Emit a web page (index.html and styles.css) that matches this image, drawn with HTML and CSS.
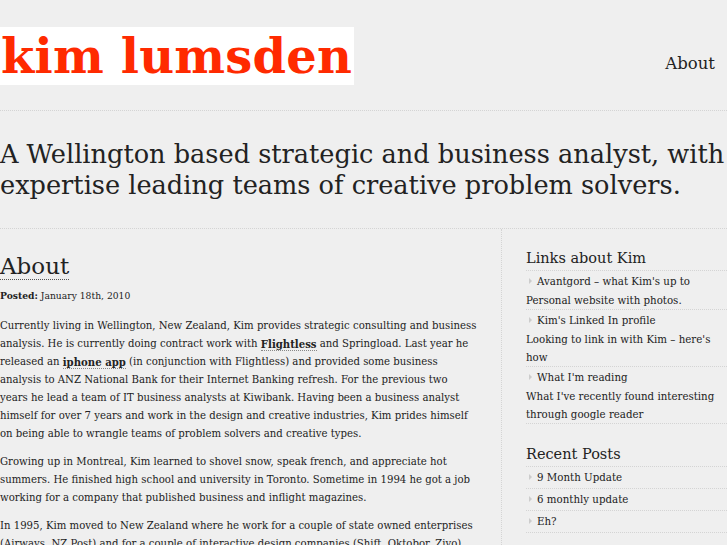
FILE: index.html
```html
<!DOCTYPE html>
<html>
<head>
<meta charset="utf-8">
<link rel="stylesheet" href="styles.css">
</head>
<body>
<div class="page">
  <header class="header">
    <div class="logo">kim lumsden</div>
    <nav class="nav"><a href="#">About</a></nav>
  </header>
  <div class="tagline">A Wellington based strategic and business analyst, with<br>expertise leading teams of creative problem solvers.</div>
  <div class="columns">
    <main class="main">
      <h2 class="post-title">About</h2>
      <div class="meta"><b>Posted:</b> January 18th, 2010</div>
      <p>Currently living in Wellington, New Zealand, Kim provides strategic consulting and business analysis. He is currently doing contract work with <a href="#">Flightless</a> and Springload. Last year he released an <a href="#">iphone app</a> (in conjunction with Flightless) and provided some business analysis to ANZ National Bank for their Internet Banking refresh. For the previous two years he lead a team of IT business analysts at Kiwibank. Having been a business analyst himself for over 7 years and work in the design and creative industries, Kim prides himself on being able to wrangle teams of problem solvers and creative types.</p>
      <p>Growing up in Montreal, Kim learned to shovel snow, speak french, and appreciate hot summers. He finished high school and university in Toronto. Sometime in 1994 he got a job working for a company that published business and inflight magazines.</p>
      <p>In 1995, Kim moved to New Zealand where he work for a couple of state owned enterprises (Airways, NZ Post) and for a couple of interactive design companies (Shift, Oktobor, Zivo).</p>
    </main>
    <aside class="sidebar">
      <h3 class="widget-title">Links about Kim</h3>
      <ul class="list links">
        <li><span class="item">Avantgord – what Kim's up to</span><div class="desc">Personal website with photos.</div></li>
        <li><span class="item">Kim's Linked In profile</span><div class="desc">Looking to link in with Kim – here's how</div></li>
        <li><span class="item">What I'm reading</span><div class="desc">What I've recently found interesting through google reader</div></li>
      </ul>
      <h3 class="widget-title">Recent Posts</h3>
      <ul class="list posts">
        <li><span class="item">9 Month Update</span></li>
        <li><span class="item">6 monthly update</span></li>
        <li><span class="item">Eh?</span></li>
      </ul>
    </aside>
  </div>
</div>
</body>
</html>
```
FILE: styles.css
```css
html, body {
  margin: 0;
  padding: 0;
  background: #efefef;
  color: #222;
  font-family: "DejaVu Serif", serif;
  overflow: hidden;
}
.page {
  width: 727px;
}
a {
  color: #222;
  text-decoration: none;
}
.header {
  display: flex;
  justify-content: space-between;
  align-items: flex-start;
  padding-top: 27px;
  padding-bottom: 25px;
  border-bottom: 1px dotted #d4d4d4;
}
.logo {
  background: #fff;
  color: #ff2a00;
  font-weight: bold;
  font-size: 48px;
  line-height: 58px;
  height: 58px;
  padding: 0 2px 0 1px;
  letter-spacing: 0.2px;
}
.nav {
  font-size: 16.5px;
  padding-top: 27px;
  padding-right: 12px;
}
.nav a { color: #222; }
.tagline {
  font-family: "DejaVu Serif", serif;
  font-size: 25.6px;
  line-height: 31px;
  padding: 28px 0 27px;
  border-bottom: 1px dotted #d4d4d4;
}
.columns {
  display: flex;
}
.main {
  width: 477px;
  flex: none;
  padding-right: 24px;
  border-right: 1px dotted #d4d4d4;
  font-size: 10.15px;
  line-height: 18px;
}
.post-title {
  display: inline-block;
  font-weight: normal;
  font-size: 23px;
  line-height: 26px;
  margin: 24px 0 0;
  border-bottom: 1px dotted #555;
}
.meta {
  font-size: 9.2px;
  margin-top: 7px;
  margin-bottom: 12px;
}
.main p {
  margin: 0 0 10px;
}
.main p a {
  font-weight: bold;
  border-bottom: 1px dotted #888;
  vertical-align: top;
}
.sidebar {
  flex: 1;
  padding-left: 24px;
  padding-top: 19px;
  font-size: 10.25px;
  line-height: 18px;
}
.widget-title {
  font-weight: normal;
  font-size: 14.5px;
  line-height: 20px;
  margin: 0;
  padding-bottom: 2px;
  border-bottom: 1px dotted #d4d4d4;
}
.list {
  list-style: none;
  margin: 0 0 20px;
  padding: 0;
}
.list li {
  border-bottom: 1px dotted #d4d4d4;
  padding: 1px 0 0;
}
.links .item {
  margin-bottom: 1px;
}
.posts li {
  padding-bottom: 2px;
}
.item {
  display: block;
  padding-left: 11px;
  position: relative;
}
.item::before {
  content: "";
  position: absolute;
  left: 3px;
  top: 6px;
  border-left: 3px solid #ccc;
  border-top: 3px solid transparent;
  border-bottom: 3px solid transparent;
}
```
